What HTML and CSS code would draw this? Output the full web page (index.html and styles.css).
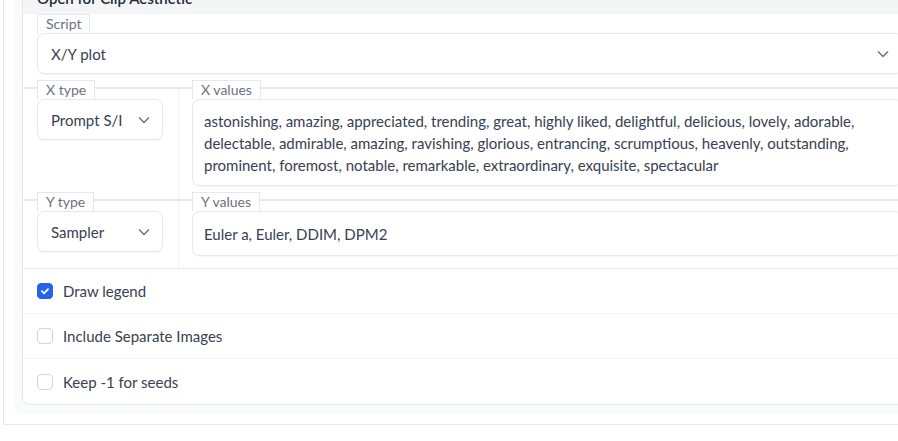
FILE: index.html
```html
<!DOCTYPE html>
<html lang="en">
<head>
  <meta charset="UTF-8" />
  <title>X/Y plot</title>
  <link rel="stylesheet" href="styles.css">
</head>
<body>

  <div class="outer">
    <div class="panel">
      <div class="header">Open for Clip Aesthetic</div>
      <div class="inner">

        <div class="block script-block">
          <span class="label">Script</span>
          <div class="dropdown">
            <span>X/Y plot</span>
            <svg class="chevron" viewBox="0 0 12 8"><path d="M1 1.5l5 5 5-5"/></svg>
          </div>
        </div>

        <div class="row">
          <div class="cell cell-type">
            <span class="label">X type</span>
            <div class="dropdown">
              <span>Prompt S/I</span>
              <svg class="chevron" viewBox="0 0 12 8"><path d="M1 1.5l5 5 5-5"/></svg>
            </div>
          </div>
          <div class="cell cell-values">
            <span class="label">X values</span>
            <div class="textbox">astonishing, amazing, appreciated, trending, great, highly liked, delightful, delicious, lovely, adorable, delectable, admirable, amazing, ravishing, glorious, entrancing, scrumptious, heavenly, outstanding, prominent, foremost, notable, remarkable, extraordinary, exquisite, spectacular</div>
          </div>
        </div>

        <div class="row row-y">
          <div class="cell cell-type">
            <span class="label">Y type</span>
            <div class="dropdown">
              <span>Sampler</span>
              <svg class="chevron" viewBox="0 0 12 8"><path d="M1 1.5l5 5 5-5"/></svg>
            </div>
          </div>
          <div class="cell cell-values">
            <span class="label">Y values</span>
            <div class="textbox">Euler a, Euler, DDIM, DPM2</div>
          </div>
        </div>

        <div class="checks">
          <label class="check">
            <span class="box checked">
              <svg viewBox="0 0 16 16"><path d="M4.5 8.2l2.4 2.4 4.6-4.8"/></svg>
            </span>
            Draw legend
          </label>
          <label class="check">
            <span class="box"></span>
            Include Separate Images
          </label>
          <label class="check">
            <span class="box"></span>
            Keep -1 for seeds
          </label>
        </div>

      </div>
    </div>
  </div>

</body>
</html>
```

FILE: styles.css
```css
* {
  box-sizing: border-box;
}
body {
  margin: 0;
  font-family: Lato, 'Liberation Sans', sans-serif;
  font-size: 15px;
  color: #374151;
  background: #fff;
  overflow: hidden;
}
.outer {
  margin: -40px -16px 0 3px;
  border: 1px solid #e5e7eb;
  padding: 10px;
}
.panel {
  background: #f9fafb;
  border-radius: 0 0 0 8px;
  padding: 0 0 9px 8px;
}
.header {
  height: 51px;
  padding: 17px 14px 0;
  line-height: 20px;
  font-weight: 600;
  color: #1f2937;
  background: #f4f5f7;
  border: 1px solid #e5e7eb;
  border-top: none;
  border-radius: 0 0 0 8px;
}
.inner {
  background: #fff;
  border: 1px solid #e5e7eb;
  border-top: none;
  border-radius: 0 0 0 8px;
}
.label {
  display: inline-block;
  margin-top: -9px;
  padding: 0 8px;
  height: 19px;
  line-height: 18px;
  font-size: 14px;
  color: #6b7280;
  background: #fff;
  border: 1px solid #e5e7eb;
  border-bottom: none;
  vertical-align: top;
}
.block {
  padding: 0 0 13px 14px;
}
.script-block .label {
  display: block;
  width: fit-content;
  margin-top: -8px;
}
.dropdown {
  display: flex;
  align-items: center;
  justify-content: space-between;
  height: 41px;
  padding: 0 12px 0 13px;
  border: 1px solid #e5e7eb;
  border-radius: 7px;
  background: #fff;
  box-shadow: 0 1px 2px rgba(0,0,0,0.04);
}
.chevron {
  width: 12px;
  height: 8px;
  fill: none;
  stroke: #6b7280;
  stroke-width: 1.5;
}
.row {
  display: flex;
  border-top: 2px solid #e5e7eb;
}
.cell {
  display: flex;
  flex-direction: column;
  align-items: flex-start;
  padding-bottom: 13px;
}
.cell .dropdown,
.cell .textbox {
  align-self: stretch;
}
.cell-type {
  width: 156px;
  flex: none;
  padding: 0 15px 0 14px;
  border-right: 1px solid #f3f4f6;
}
.cell-values {
  flex: 1;
  padding: 0 0 13px 13px;
}
.textbox {
  padding: 10px 12px 9px 11px;
  line-height: 22px;
  border: 1px solid #e5e7eb;
  border-radius: 7px;
  box-shadow: 0 1px 2px rgba(0,0,0,0.04);
}
.row-y .cell-values {
  padding-bottom: 12px;
}
.row-y .textbox {
  height: 45px;
  padding-top: 11px;
}
.checks {
  border-top: 1px solid #e5e7eb;
}
.check {
  display: flex;
  align-items: center;
  gap: 10px;
  height: 45px;
  padding-left: 14px;
  border-bottom: 1px solid #f3f4f6;
}
.check:last-child {
  border-bottom: none;
}
.box {
  width: 16px;
  height: 16px;
  border: 1px solid #d1d5db;
  border-radius: 4px;
  background: #fff;
}
.box.checked {
  background: #2563eb;
  border-color: #2563eb;
}
.box svg {
  display: block;
  width: 14px;
  height: 14px;
  fill: none;
  stroke: #fff;
  stroke-width: 2;
  stroke-linecap: round;
  stroke-linejoin: round;
}
```
